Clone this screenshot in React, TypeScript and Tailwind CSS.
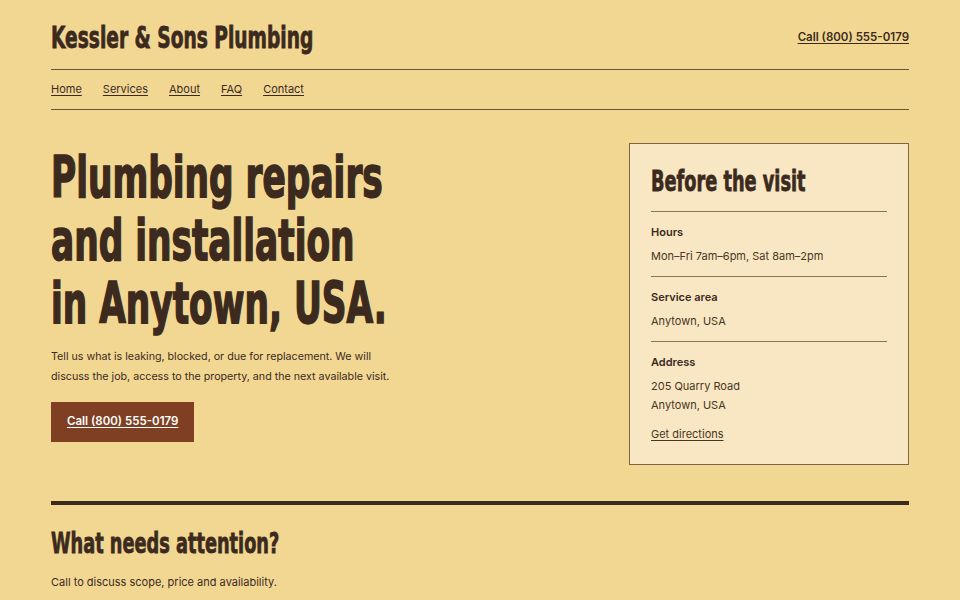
import React from "react";

const body = { fontFamily: "Inter, 'Liberation Sans', sans-serif" };
const display = { fontFamily: "'DejaVu Sans Condensed', 'Liberation Sans', sans-serif" };

function Info({ label, children, last }: { label: string; children: React.ReactNode; last?: boolean }) {
  return (
    <div className={last ? "pt-[10px]" : "pt-[10px] pb-[10px] border-b border-[#8c7550]"}>
      <div className="text-[11px] font-semibold leading-5">{label}</div>
      <div className="mt-[5px] text-[11px] leading-[19px] text-[#4a3526]">{children}</div>
    </div>
  );
}

export default function App() {
  return (
    <div className="min-h-screen w-full bg-[#f2d793] text-[#3b2a1d]" style={body}>
      <div className="px-[51px]">
        <header className="flex items-center justify-between h-[70px] pt-[7px] border-b border-[#6b543a]">
          <div
            className="origin-left scale-x-[0.69] whitespace-nowrap text-[30px] font-bold leading-none [-webkit-text-stroke:0.8px_#3b2a1d]"
            style={display}
          >
            Kessler &amp; Sons Plumbing
          </div>
          <a className="text-[11.5px] font-semibold underline underline-offset-2">Call (800) 555-0179</a>
        </header>
        <nav className="flex items-center gap-[21px] h-[40px] border-b border-[#6b543a] text-[11px]">
          <a className="underline underline-offset-2">Home</a>
          <a className="underline underline-offset-2">Services</a>
          <a className="underline underline-offset-2">About</a>
          <a className="underline underline-offset-2">FAQ</a>
          <a className="underline underline-offset-2">Contact</a>
        </nav>

        <section className="flex justify-between pt-[33px] pb-[36px] border-b-4 border-[#3b2a1d]">
          <div className="pt-[3px]">
            <h1
              className="origin-left scale-x-[0.67] whitespace-nowrap text-[57px] font-bold leading-[63px] [-webkit-text-stroke:1.6px_#3b2a1d]"
              style={display}
            >
              Plumbing repairs<br />and installation<br />in Anytown, USA.
            </h1>
            <p className="mt-[12px] w-[346px] text-[10.7px] leading-5">
              Tell us what is leaking, blocked, or due for replacement. We will discuss the job, access to the property, and the next available visit.
            </p>
            <a className="mt-[15px] inline-flex items-center h-[40px] px-[16px] bg-[#7e3f22] text-white text-[11.5px] font-semibold underline underline-offset-2">
              Call (800) 555-0179
            </a>
          </div>

          <aside className="w-[280px] self-start border border-[#7d6545] bg-[#f8e7c2] px-[21px] pt-[19px] pb-[20px]">
            <div className="pb-[12px] border-b border-[#8c7550]">
              <h2
                className="origin-left scale-x-[0.68] whitespace-nowrap text-[29px] font-bold leading-[36px] [-webkit-text-stroke:0.8px_#3b2a1d]"
                style={display}
              >
                Before the visit
              </h2>
            </div>
            <Info label="Hours">Mon–Fri 7am–6pm, Sat 8am–2pm</Info>
            <Info label="Service area">Anytown, USA</Info>
            <Info label="Address" last>
              205 Quarry Road<br />Anytown, USA
              <div className="mt-[9px] leading-5">
                <a className="underline underline-offset-2">Get directions</a>
              </div>
            </Info>
          </aside>
        </section>

        <section className="pt-[20px]">
          <h2
            className="origin-left scale-x-[0.68] whitespace-nowrap text-[29px] font-bold leading-[36px] [-webkit-text-stroke:0.8px_#3b2a1d]"
            style={display}
          >
            What needs attention?
          </h2>
          <p className="mt-[11px] text-[11px] leading-5">Call to discuss scope, price and availability.</p>
        </section>
      </div>
    </div>
  );
}
